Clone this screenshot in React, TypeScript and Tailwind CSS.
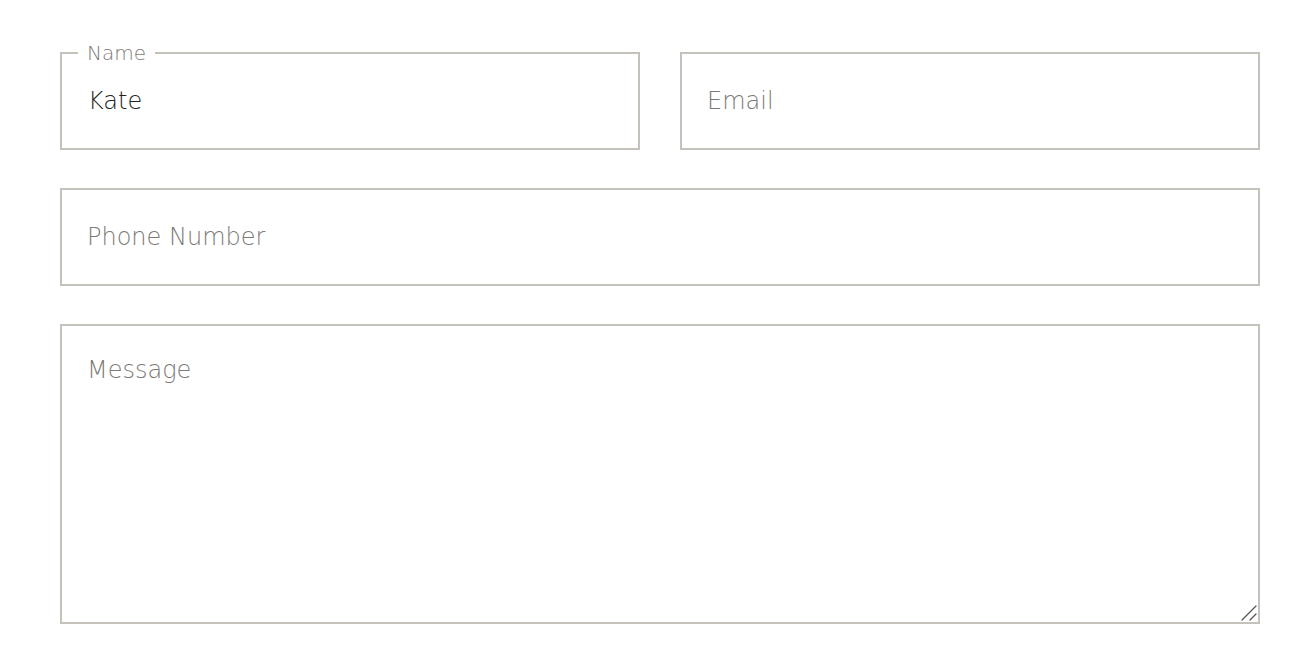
import React from 'react';

const fieldClass =
    "w-full h-[98px] border-2 border-[#c5c2bc] bg-white px-[25px] text-[24px] font-extralight text-[#222] placeholder:text-[#7d7a76] outline-none";

export default function App() {
    return (
        <div className="min-h-screen bg-white pt-[52px] pl-[60px] pr-[52px] font-['DejaVu_Sans',sans-serif]">
            <form className="flex flex-col gap-[38px]">
                <div className="grid grid-cols-2 gap-10">
                    <div className="relative">
                        <span className="absolute left-[18px] top-[-11px] bg-white px-[9px] text-[20px] leading-[24px] font-extralight text-[#7d7a76]">
                            Name
                        </span>
                        <input type="text" defaultValue="Kate" className={fieldClass + " pl-[26px]"} />
                    </div>
                    <input type="email" placeholder="Email" className={fieldClass} />
                </div>
                <input type="tel" placeholder="Phone Number" className={fieldClass} />
                <div className="relative">
                    <textarea
                        placeholder="Message"
                        className="block w-full h-[300px] resize-none border-2 border-[#c5c2bc] bg-white px-[25px] pt-[26px] text-[24px] font-extralight text-[#222] placeholder:text-[#7d7a76] outline-none"
                    />
                    {/* resize grip */}
                    <svg className="pointer-events-none absolute right-[3px] bottom-[3px] w-4 h-4" viewBox="0 0 16 16">
                        <path d="M1 15 L15 1 M9 15 L15 9" stroke="#555" strokeWidth="1.3" strokeLinecap="round" fill="none" />
                    </svg>
                </div>
            </form>
        </div>
    );
}
